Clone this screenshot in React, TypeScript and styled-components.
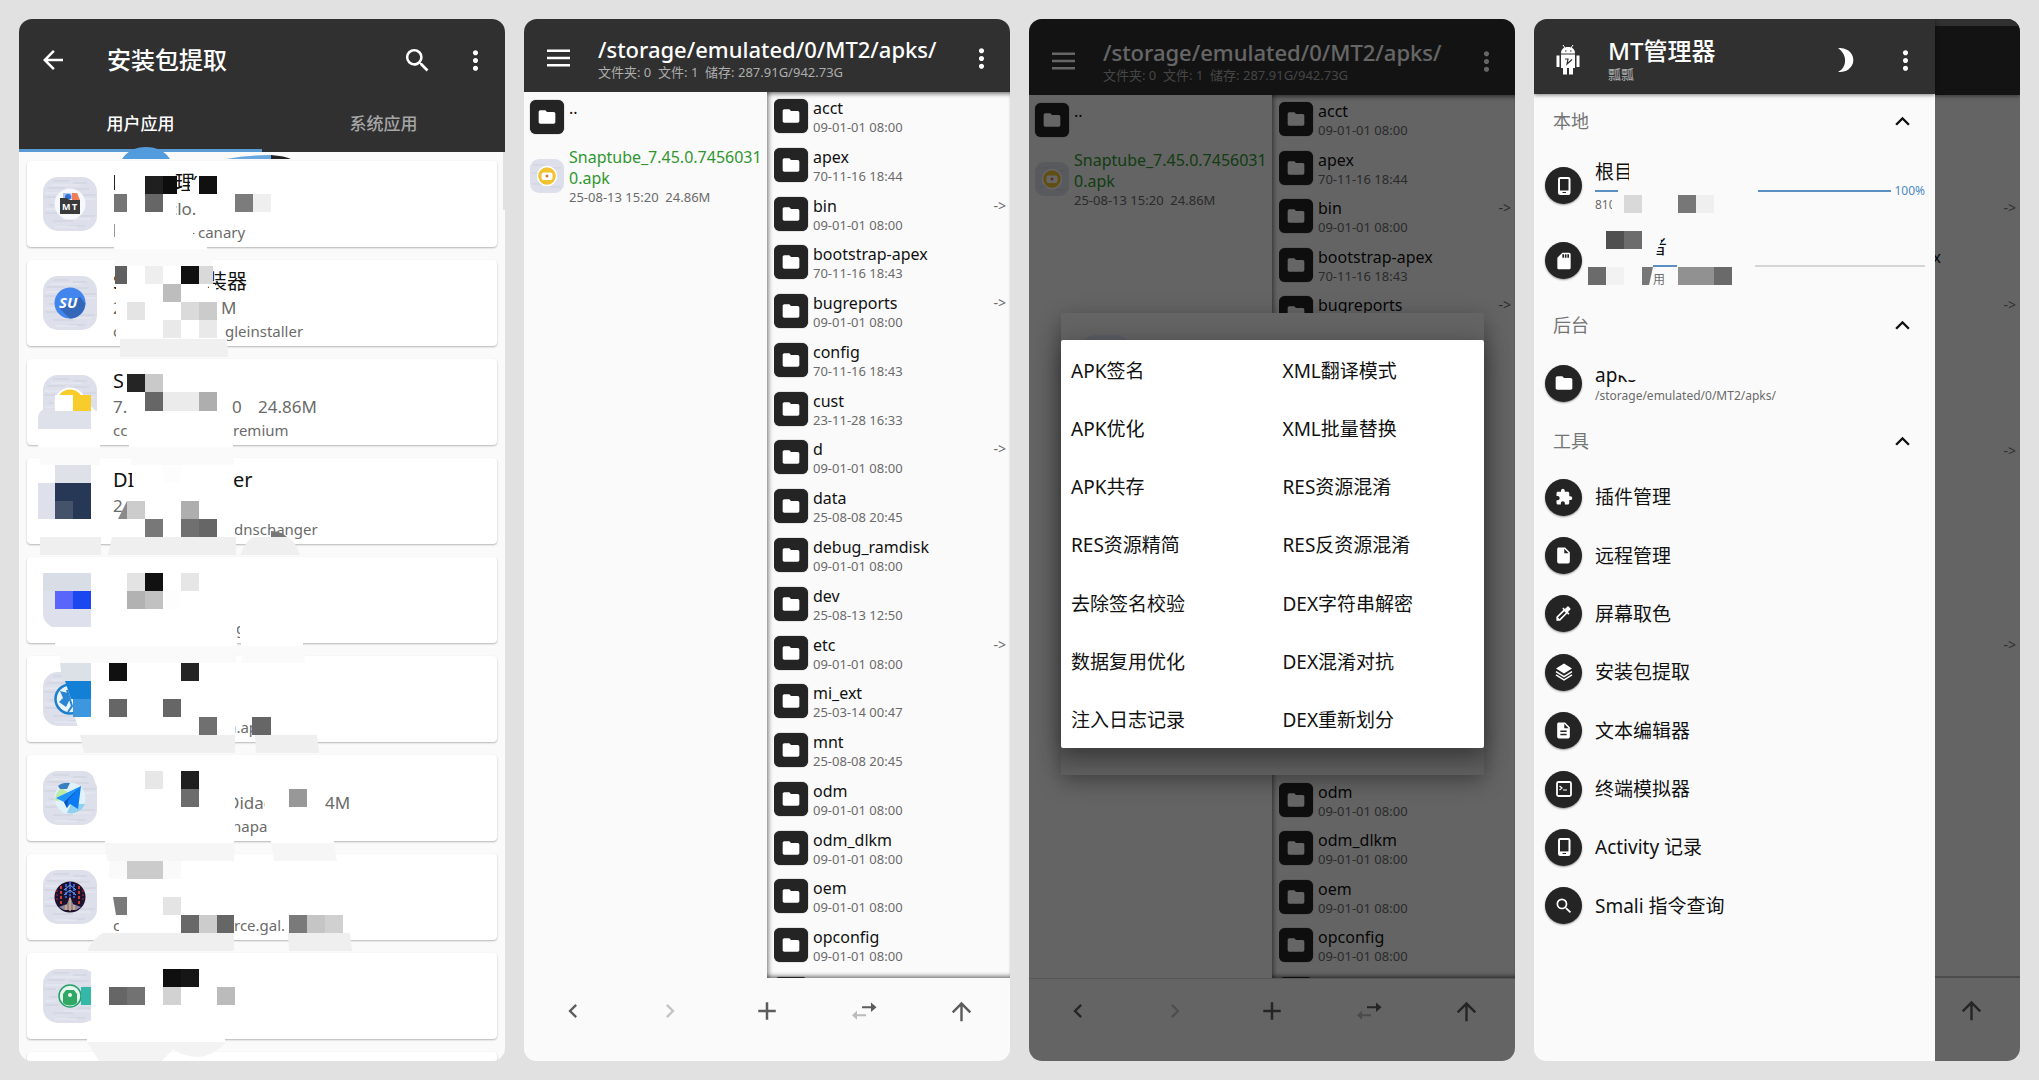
import React from "react";
import styled, { createGlobalStyle, css } from "styled-components";
import {
  MdAdd,
  MdArrowBack,
  MdArrowUpward,
  MdChevronLeft,
  MdChevronRight,
  MdColorize,
  MdDescription,
  MdExtension,
  MdFolder,
  MdInsertDriveFile,
  MdKeyboardArrowUp,
  MdMoreVert,
  MdSdCard,
  MdSearch,
} from "react-icons/md";

const GlobalStyle = createGlobalStyle`
  * { box-sizing: border-box; }
  body {
    margin: 0;
    background: #e1e1e1;
    font-family: "Noto Sans", "Noto Sans CJK SC", sans-serif;
  }
  ul { list-style: none; margin: 0; padding: 0; }
  h2, p { margin: 0; font-weight: 400; }
  button {
    border: 0;
    padding: 0;
    background: none;
    color: inherit;
    font: inherit;
    text-align: left;
  }
  svg { display: block; flex: none; }
`;

/* ---------- shared ---------- */

const Gallery = styled.main`
  display: grid;
  grid-template-columns: repeat(4, minmax(0, 1fr));
  gap: 19px;
  height: 100vh;
  padding: 19px;
`;

const Phone = styled.section`
  position: relative;
  display: flex;
  flex-direction: column;
  min-height: 0;
  overflow: hidden;
  border-radius: 13px;
  background: #fafafa;
`;

const IconButton = styled.button`
  display: flex;
  align-items: center;
  justify-content: center;
  width: 30px;
  height: 30px;
`;

const Overlay = styled.svg<{ $top: number }>`
  position: absolute;
  top: ${(p) => p.$top}px;
  left: 0;
  pointer-events: none;
`;

type Block = [number, number, number, number, string];

const Blocks = ({ items }: { items: Block[] }) => (
  <g shapeRendering="crispEdges">
    {items.map(([x, y, w, h, fill], i) => (
      <rect key={i} x={x} y={y} width={w} height={h} fill={fill} />
    ))}
  </g>
);

/* ---------- screen 1: package extraction ---------- */

const ExtractHeader = styled.header`
  flex: none;
  background: #303030;
  color: #fff;
`;

const ExtractBar = styled.div`
  display: flex;
  align-items: center;
  gap: 28px;
  height: 82px;
  padding: 0 15px 0 19px;
`;

const ExtractTitle = styled.h2`
  flex: 1;
  padding-left: 11px;
  font-size: 24px;
  line-height: 32px;
  font-weight: 500;
`;

const Tabs = styled.div`
  display: grid;
  grid-template-columns: 1fr 1fr;
`;

const Tab = styled.button<{ $active?: boolean }>`
  height: 51px;
  padding-bottom: 3px;
  border-bottom: 3px solid ${(p) => (p.$active ? "#5b9bd5" : "transparent")};
  color: ${(p) => (p.$active ? "#fff" : "#a6a6a6")};
  font-size: 17px;
  line-height: 24px;
  font-weight: 500;
  text-align: center;
`;

const AppList = styled.ul`
  display: flex;
  flex: 1;
  flex-direction: column;
  gap: 13px;
  min-height: 0;
  padding: 9px 8px 0;
  overflow: hidden;
`;

const AppCard = styled.li`
  display: flex;
  flex: none;
  gap: 16px;
  height: 86px;
  padding: 9px 16px 0;
  border-radius: 4px;
  background: #fff;
  box-shadow: 0 1px 2px rgba(0, 0, 0, 0.28);

  > svg {
    margin-top: 7px;
  }
`;

const lineKinds = {
  name: css`
    height: 26px;
    font-size: 20px;
    line-height: 26px;
    color: #111;
  `,
  version: css`
    height: 26px;
    font-size: 17px;
    line-height: 26px;
    color: #6b6b6b;
  `,
  pkg: css`
    height: 20px;
    font-size: 15px;
    line-height: 20px;
    color: #6b6b6b;
  `,
};

const AppLine = styled.div<{ $kind: keyof typeof lineKinds }>`
  display: flex;
  white-space: pre;
  ${(p) => lineKinds[p.$kind]}
`;

const Slot = styled.span<{ $w: number }>`
  flex: none;
  width: ${(p) => p.$w}px;
`;

/* Each piece of a line: text and the room it takes before the next piece. */
type Piece = [string, number];
type AppEntry = {
  art: React.ReactNode;
  name: Piece[];
  version: Piece[];
  pkg: Piece[];
};

const Tile = ({ children }: { children?: React.ReactNode }) => (
  <svg width="54" height="54" viewBox="0 0 54 54">
    <rect width="54" height="54" rx="15" fill="#dde0ea" />
    <g stroke="#c9cddb" strokeWidth="1" fill="none" opacity=".8">
      <path d="M10 4h16M30 6h14M4 11h18M26 12h20M1 20h12M40 18h13M2 36h14M34 39h18M10 44h20M26 49h16M6 28h8" />
    </g>
    <g stroke="#e9ebf2" strokeWidth="1" fill="none">
      <path d="M8 8h30M2 16h20M30 22h22M2 32h10M20 42h28M12 50h22" />
    </g>
    {children}
  </svg>
);

const IconText = styled.text`
  font-family: "Noto Sans", sans-serif;
  font-weight: 700;
  fill: #fff;
`;

const apps: AppEntry[] = [
  {
    art: (
      <Tile>
        <circle cx="27" cy="27" r="15.5" fill="#f6f8fb" />
        <path d="M20 22v-6h8l2 6z" fill="#a9c4ee" />
        <circle cx="25" cy="20" r="3" fill="#2f6fd8" />
        <path d="M29 16h5l3 7h-8z" fill="#ef7d57" />
        <path d="M17 21h7l2 2h11v14H17z" fill="#3a3a3a" />
        <IconText x="19" y="33" fontSize="9">M</IconText>
        <IconText x="29" y="33" fontSize="9">T</IconText>
      </Tile>
    ),
    name: [["", 62], ["理", 17], ["′", 20]],
    version: [["", 56], ["clo.", 40]],
    pkg: [["", 77], ["-", 8], ["canary", 60]],
  },
  {
    art: (
      <Tile>
        <circle cx="27" cy="27" r="15.5" fill="#4285ec" />
        <path d="M37 21L42.300 27.500A15.500 15.500 0 0 1 27 42.500L17 33z" fill="#3467b8" />
        <IconText x="16" y="32" fontSize="15" fontStyle="italic">SU</IconText>
      </Tile>
    ),
    name: [["S", 94], ["装器", 44]],
    version: [["2", 108], ["M", 20]],
    pkg: [["c", 112], ["gleinstaller", 90]],
  },
  {
    art: (
      <Tile>
        <circle cx="27" cy="28" r="14.500" fill="#f8cd2b" stroke="#fff" strokeWidth="2" />
      </Tile>
    ),
    name: [["S", 20]],
    version: [["7.", 119], ["0", 26], ["24.86M", 60]],
    pkg: [["cc", 120], ["remium", 60]],
  },
  {
    art: <svg width="54" height="54" />,
    name: [["DI", 120], ["er", 24]],
    version: [["2", 20]],
    pkg: [["", 121], ["dnschanger", 90]],
  },
  {
    art: <svg width="54" height="54" />,
    name: [],
    version: [],
    pkg: [["", 123], ["g", 10]],
  },
  {
    art: (
      <Tile>
        <circle cx="27" cy="27" r="14.500" fill="#eaf4fc" stroke="#1d7fd0" strokeWidth="2.500" />
        <path d="M17 19l8 2 2 6-4 8-7-5 4-4z" fill="#2a86d2" />
        <path d="M24 18l5 16-4 6" stroke="#2a86d2" strokeWidth="2" fill="none" />
      </Tile>
    ),
    name: [],
    version: [],
    pkg: [["", 115], ["a.ap", 30]],
  },
  {
    art: (
      <Tile>
        <circle cx="27" cy="27" r="15.500" fill="#dff2fb" />
        <path d="M12 30a15.500 15.500 0 0 1 7-13l8 6-8 6z" fill="#bdeaa5" />
        <path d="M15 15q5-4 12-3l-3 6h-7z" fill="#3b7fc0" />
        <path d="M24 42l4-9h14a15.500 15.500 0 0 1-18 9z" fill="#8fd0ee" />
        <path d="M38 15L13 27l8 4z" fill="#1f94ff" />
        <path d="M38 15L21 31l3 6 3-4 8 5z" fill="#0a7bf2" />
        <path d="M38 15L21 31l3 6 1-8z" fill="#0b55b5" />
      </Tile>
    ),
    name: [],
    version: [["", 114], ["Didac", 98], ["4M", 30]],
    pkg: [["", 119], ["napa.", 40]],
  },
  {
    art: (
      <Tile>
        <circle cx="27" cy="27" r="15.500" fill="#1c1230" />
        <path d="M18 16v20M36 16v20" stroke="#c8402e" strokeWidth="2" strokeDasharray="3 2" />
        <path d="M14 20v12M40 20v12" stroke="#6f1d2b" strokeWidth="2" strokeDasharray="2 2" />
        <path d="M23 14v14M27 12v14M31 14v14" stroke="#2d5fd0" strokeWidth="2" strokeDasharray="3 1" />
        <path d="M21 20l6-5 6 5M21 25l6-5 6 5" stroke="#77a8f0" fill="none" />
        <path d="M27 26l3 8 8 3-5 3H21l-5-3 8-3z" fill="#8a86a8" />
        <path d="M27 28v13M23 35v5M31 35v5" stroke="#e5b06a" strokeWidth="1.500" />
      </Tile>
    ),
    name: [],
    version: [],
    pkg: [["c", 121], ["rce.gal.", 60]],
  },
  {
    art: (
      <Tile>
        <circle cx="27" cy="27" r="11" fill="#e8f7ee" stroke="#23a06b" strokeWidth="1.500" />
        <path d="M20 34v-9l3-4h8l3 4v9a11 11 0 0 1-14 0z" fill="#2fa765" />
        <circle cx="27" cy="26" r="2" fill="#e8f7ee" />
      </Tile>
    ),
    name: [],
    version: [],
    pkg: [],
  },
  { art: <svg width="54" height="54" />, name: [], version: [], pkg: [] },
];

const W = "#fff";
const extractBlocks: Block[] = [
  // row 1
  [114, 246, 93, 3, W], [115, 249, 97, 17, "#fafafa"],
  [145, 176, 18, 18, "#1f1f1f"], [163, 176, 14, 18, "#0d0d0d"],
  [199, 176, 18, 18, "#101010"], [190, 180, 7, 14, "#fafafa"],
  [114, 175, 1, 15, "#222"], [114, 194, 13, 18, "#757575"], [127, 194, 18, 18, W],
  [145, 194, 18, 18, "#666"], [163, 196, 13, 22, W],
  [235, 194, 18, 18, "#7c7c7c"], [253, 194, 18, 18, "#efefef"],
  [114, 224, 1, 13, "#999"], [160, 231, 33, 10, W],
  // row 2
  [116, 284, 60, 54, W],
  [115, 266, 12, 18, "#606060"], [127, 266, 18, 18, W], [145, 266, 18, 18, "#eee"],
  [181, 266, 18, 18, "#101010"], [199, 266, 14, 18, "#d9d9d9"],
  [163, 284, 18, 18, "#bdbdbd"], [127, 302, 18, 18, "#e4e4e4"],
  [181, 302, 18, 18, "#dadada"], [199, 302, 18, 18, "#cbcbcb"],
  [163, 320, 18, 18, "#e9e9e9"], [199, 320, 18, 18, "#e9e9e9"], [217, 320, 7, 18, W],
  // row 3
  [123, 374, 8, 20, W], [127, 374, 18, 18, "#252525"], [145, 374, 18, 18, "#c9c9c9"],
  [127, 412, 106, 28, W],
  [145, 392, 18, 19, "#666"], [163, 392, 36, 19, "#ebebeb"], [199, 392, 18, 19, "#aeaeae"],
  [55, 395, 18, 16, W], [73, 395, 18, 16, "#f8cd2b"],
  [91, 411, 7, 19, W], [38, 429, 62, 18, W], [129, 443, 104, 5, W],
  [40, 447, 60, 18, "#fafafa"], [131, 447, 103, 18, "#fafafa"],
  // row 4
  [132, 465, 101, 18, W], [163, 465, 18, 18, "#fdfdfd"], [230, 519, 5, 18, W],
  [55, 465, 36, 18, "#dfe1e8"], [38, 483, 17, 36, "#dee0eb"], [55, 483, 36, 36, "#273857"],
  [55, 501, 18, 18, "#445369"], [127, 501, 18, 18, "#ccc"], [181, 501, 18, 18, "#aeaeae"],
  [145, 519, 18, 18, "#787878"], [181, 519, 18, 18, "#707070"], [199, 519, 18, 18, "#666"],
  [40, 537, 61, 18, "#efefef"],
  // row 5
  [127, 573, 18, 18, "#e3e3e3"], [145, 573, 18, 18, "#111"], [181, 573, 18, 18, "#e6e6e6"],
  [127, 591, 18, 18, "#b2b2b2"], [145, 591, 18, 18, "#c1c1c1"], [163, 591, 18, 18, "#fdfdfd"],
  [231, 620, 6, 20, W], [240, 620, 12, 20, W],
  [55, 636, 182, 10, W], [241, 640, 62, 6, W], [60, 646, 176, 17, "#fafafa"], [242, 646, 63, 17, "#fafafa"],
  // row 6
  [109, 663, 18, 18, "#101010"], [181, 663, 18, 18, "#242424"],
  [109, 699, 18, 18, "#666"], [163, 699, 18, 18, "#666"],
  [226, 717, 9, 18, W], [199, 717, 18, 18, "#707070"], [252, 717, 19, 18, "#666"],
  // row 7
  [145, 771, 18, 18, "#e7e7e7"], [181, 771, 18, 18, "#202020"], [181, 789, 18, 18, "#6c6c6c"],
  [226, 790, 9, 48, W], [265, 790, 12, 24, W], [289, 789, 18, 18, "#989898"], [268, 815, 10, 20, W],
  [105, 840, 129, 3, W], [271, 840, 63, 3, W],
  // row 8
  [109, 861, 18, 18, "#fafafa"], [127, 861, 36, 18, "#cbcbcb"], [163, 861, 18, 18, "#fafafa"],
  [163, 897, 18, 18, "#e4e4e4"], [119, 915, 20, 18, W],
  [181, 915, 18, 18, "#686868"], [199, 915, 18, 18, "#ccc"], [217, 915, 17, 18, "#666"],
  [289, 915, 18, 18, "#7a7a7a"], [307, 915, 18, 18, "#c5c5c5"], [325, 915, 18, 18, "#d0d0d0"],
  // row 9
  [91, 968, 8, 56, W], [81, 987, 10, 18, "#35b8a8"],
  [163, 969, 18, 18, "#0f0f0f"], [181, 969, 18, 18, "#161616"],
  [109, 987, 18, 18, "#666"], [127, 987, 18, 18, "#727272"],
  [163, 987, 18, 18, "#d2d2d2"], [217, 987, 18, 18, "#bbb"],
  [87, 1039, 138, 3, W],
];

const ExtractMosaic = () => (
  <Overlay $top={121} width="486" height="921" viewBox="19 140 486 921">
    <path d="M122 159q8-12 24-12t24 12z" fill="#529bdc" />
    <path d="M226 159q22-4 45-4v4z" fill="#67a6de" />
    <path d="M271 155q14 1 20 4h-20z" fill="#222" />
    <path d="M503 152h2v58h-2z" fill="#e1e1e1" />
    <path d="M38 429V416q3-7 5-6h48v19z" fill="#dfe1ea" />
    <path d="M86 402l11 10v3H91v-4z" fill={W} />
    <Blocks items={extractBlocks} />
    <path d="M120 339h107l1 18H120z" fill="#f0f0f0" />
    <path d="M209 284h6l4 18h-10z" fill={W} />
    <path d="M118 519l9-18v18z" fill="#8a8a8a" />
    <path d="M112 537h124v18H108z" fill="#efefef" />
    <path d="M240 555l4-8q5-9 10-10h34q7 3 12 18z" fill="#efefef" />
    <path d="M271 531q10 0 16 6h-16z" fill="#777" />
    <path d="M43 573h48v18H43z" fill="#d8dde6" />
    <path d="M43 591h48v36H52q-9-5-9-13z" fill="#dee0eb" />
    <path d="M55 591h18v18H55z" fill="#5a66fa" />
    <path d="M73 591h18v18H73z" fill="#1a47ee" />
    <path d="M60 663h31v18H62z" fill="#dce1e7" />
    <path d="M65 681h26v18H71z" fill="#1380d6" />
    <path d="M73 699h18v18H73z" fill="#3d97df" />
    <path d="M75 717h24v10H78z" fill={W} />
    <path d="M91 671h8v50h-8z" fill={W} />
    <path d="M80 735h155v18H84zM255 735h62l2 18h-63z" fill="#efefef" />
    <path d="M91 771l6 16v-17z" fill={W} />
    <path d="M105 843h130l-1 18H107zM271 843h63l3 18h-63z" fill="#f6f6f6" />
    <path d="M113 897h14v18h-11z" fill="#7a7a7a" />
    <path d="M87 951q7-15 17-18h130v18zM288 933h62l2 18h-63z" fill="#efefef" />
    <path d="M87 1042h139q-12 14-28 15-14 0-25-8l-11 12H99z" fill="#f3f3f3" />
  </Overlay>
);

const AppText = ({ kind, pieces }: { kind: keyof typeof lineKinds; pieces: Piece[] }) => (
  <AppLine $kind={kind}>
    {pieces.map(([text, w], i) => (
      <Slot key={i} $w={w}>{text}</Slot>
    ))}
  </AppLine>
);

const ExtractScreen = () => (
  <Phone aria-label="安装包提取">
    <ExtractHeader>
      <ExtractBar>
        <IconButton aria-label="返回"><MdArrowBack size={30} /></IconButton>
        <ExtractTitle>安装包提取</ExtractTitle>
        <IconButton aria-label="搜索"><MdSearch size={31} /></IconButton>
        <IconButton aria-label="更多"><MdMoreVert size={31} /></IconButton>
      </ExtractBar>
      <Tabs role="tablist">
        <Tab role="tab" aria-selected $active>用户应用</Tab>
        <Tab role="tab" aria-selected={false}>系统应用</Tab>
      </Tabs>
    </ExtractHeader>
    <AppList>
      {apps.map((app, i) => (
        <AppCard key={i}>
          {app.art}
          <div>
            <AppText kind="name" pieces={app.name} />
            <AppText kind="version" pieces={app.version} />
            <AppText kind="pkg" pieces={app.pkg} />
          </div>
        </AppCard>
      ))}
    </AppList>
    <ExtractMosaic />
  </Phone>
);

/* ---------- file manager (screens 2 and 3) ---------- */

const PathBar = styled.header<{ $drop: number }>`
  display: flex;
  flex: none;
  align-items: center;
  height: ${(p) => 73 + p.$drop}px;
  padding: ${(p) => 5 + p.$drop}px 14px 0 19px;
  background: #303030;
  color: #fff;
`;

const Heading = styled.div`
  flex: 1;
  min-width: 0;
  padding-left: 25px;
  white-space: pre;
`;

const HeadTitle = styled.h2<{ $size: number }>`
  font-size: ${(p) => p.$size}px;
  line-height: 28px;
  font-weight: 500;
`;

const HeadNote = styled.p`
  font-size: 13px;
  line-height: 18px;
  color: #adadad;
`;

const Panes = styled.div`
  display: grid;
  flex: 1;
  grid-template-columns: 1fr 1fr;
  min-height: 0;
`;

const LeftPane = styled.ul`
  padding: 6px 0 0 6px;
`;

const RightPane = styled.ul`
  display: grid;
  grid-template-rows: repeat(18, minmax(0, 1fr)) 8px;
  min-height: 0;
  padding-left: 7px;
  overflow: hidden;
  box-shadow: inset 5px 0 4px -3px rgba(0, 0, 0, 0.4), inset 0 5px 4px -3px rgba(0, 0, 0, 0.5),
    inset 0 -5px 4px -3px rgba(0, 0, 0, 0.5);
`;

const FileRow = styled.li`
  display: flex;
  align-items: flex-start;
  padding-top: 6px;
  overflow: hidden;
`;

const LeftRow = styled.li`
  display: flex;
  align-items: center;
  min-height: 37px;
  margin-bottom: 12px;
`;

const FolderTile = styled.span`
  display: grid;
  flex: none;
  place-items: center;
  width: 34px;
  height: 34px;
  margin-top: 1px;
  border-radius: 6px;
  background: #242424;
  color: #fff;
  box-shadow: 0 0 1px #242424;
`;

const FileText = styled.div`
  flex: 1;
  min-width: 0;
  padding-left: 5px;
`;

const FileName = styled.p<{ $green?: boolean }>`
  font-size: 16px;
  line-height: 21px;
  color: ${(p) => (p.$green ? "#2f962f" : "#111")};
  word-break: break-all;
`;

const FileDate = styled.p`
  height: 16px;
  font-size: 13px;
  line-height: 16px;
  color: #6b6b6b;
  white-space: pre;
`;

const LinkMark = styled.span`
  padding: 1px 4px 0 0;
  font-size: 14px;
  line-height: 18px;
  color: #6b6b6b;
`;

const BottomBar = styled.nav<{ $line?: boolean }>`
  display: grid;
  flex: none;
  grid-template-columns: repeat(5, 1fr);
  height: 83px;
  padding-top: 17px;
  border-top: 1px solid ${(p) => (p.$line ? "#d8d8d8" : "#fafafa")};
  background: #fafafa;
  color: #5c5c5c;
`;

const BarButton = styled.button<{ $dim?: boolean }>`
  display: flex;
  align-items: center;
  justify-content: center;
  height: 30px;
  color: ${(p) => (p.$dim ? "#c4c4c4" : "inherit")};
`;

const files: [string, string, boolean?][] = [
  ["acct", "09-01-01 08:00"],
  ["apex", "70-11-16 18:44"],
  ["bin", "09-01-01 08:00", true],
  ["bootstrap-apex", "70-11-16 18:43"],
  ["bugreports", "09-01-01 08:00", true],
  ["config", "70-11-16 18:43"],
  ["cust", "23-11-28 16:33"],
  ["d", "09-01-01 08:00", true],
  ["data", "25-08-08 20:45"],
  ["debug_ramdisk", "09-01-01 08:00"],
  ["dev", "25-08-13 12:50"],
  ["etc", "09-01-01 08:00", true],
  ["mi_ext", "25-03-14 00:47"],
  ["mnt", "25-08-08 20:45"],
  ["odm", "09-01-01 08:00"],
  ["odm_dlkm", "09-01-01 08:00"],
  ["oem", "09-01-01 08:00"],
  ["opconfig", "09-01-01 08:00"],
];

const MenuIcon = () => (
  <svg width="30" height="30" viewBox="0 0 30 30" fill="currentColor">
    <path d="M4 6.500h23v2.400H4zM4 13.800h23v2.400H4zM4 21h23v2.400H4z" />
  </svg>
);

const SwapIcon = () => (
  <svg width="26" height="22" viewBox="0 0 26 22">
    <path d="M11 6.300h9V2.500l5.500 4.800-5.500 4.700V8.300h-9z" fill="currentColor" />
    <path d="M15 14.300H6v-3.500l-5 4.500 5 4.500v-3.500h9z" fill="currentColor" opacity=".4" />
  </svg>
);

const SnapIcon = () => (
  <svg width="34" height="34" viewBox="0 0 34 34">
    <rect width="34" height="34" rx="9" fill="#dde0ea" />
    <path d="M3 6h12M18 9h13M2 14h7M3 25h8M20 28h11" stroke="#cdd1de" />
    <circle cx="17" cy="17" r="9.500" fill="#f2c230" stroke="#fff" strokeWidth="1.500" />
    <rect x="11.500" y="13.500" width="11" height="7.500" rx="2" fill="#fff" />
    <circle cx="17" cy="17" r="1.500" fill="#d9743a" />
  </svg>
);

const Folder = () => (
  <FolderTile><MdFolder size={20} /></FolderTile>
);

type ManagerProps = {
  drop: number;
  line?: boolean;
  /* Rows first..last lie under an open dialog and keep only their space. */
  covered?: [number, number];
};

const FileManager = ({ drop, line, covered = [99, 99] }: ManagerProps) => (
  <>
    <PathBar $drop={drop}>
      <IconButton aria-label="菜单"><MenuIcon /></IconButton>
      <Heading>
        <HeadTitle $size={22}>/storage/emulated/0/MT2/apks/</HeadTitle>
        <HeadNote>{"文件夹: 0  文件: 1  储存: 287.91G/942.73G"}</HeadNote>
      </Heading>
      <IconButton aria-label="更多"><MdMoreVert size={31} /></IconButton>
    </PathBar>
    <Panes>
      <LeftPane>
        <LeftRow>
          <Folder />
          <FileText>
            <FileName>..</FileName>
            <FileDate />
          </FileText>
        </LeftRow>
        <LeftRow>
          <SnapIcon />
          <FileText>
            <FileName $green>Snaptube_7.45.0.74560310.apk</FileName>
            <FileDate>{"25-08-13 15:20  24.86M"}</FileDate>
          </FileText>
        </LeftRow>
      </LeftPane>
      <RightPane>
        {files.map(([name, date, link], i) => {
          if (i > covered[0] && i <= covered[1]) return <FileRow key={name} />;
          return (
            <FileRow key={name}>
              <Folder />
              <FileText>
                <FileName>{name}</FileName>
                {i !== covered[0] && <FileDate>{date}</FileDate>}
              </FileText>
              {link && <LinkMark>-&gt;</LinkMark>}
            </FileRow>
          );
        })}
        <FileRow>
          <Folder />
        </FileRow>
      </RightPane>
    </Panes>
    <BottomBar $line={line}>
      <BarButton aria-label="后退"><MdChevronLeft size={28} /></BarButton>
      <BarButton aria-label="前进" $dim><MdChevronRight size={28} /></BarButton>
      <BarButton aria-label="新建"><MdAdd size={30} /></BarButton>
      <BarButton aria-label="同步"><SwapIcon /></BarButton>
      <BarButton aria-label="上级"><MdArrowUpward size={29} /></BarButton>
    </BottomBar>
  </>
);

const Scrim = styled.div`
  position: absolute;
  inset: 0;
  background: rgba(0, 0, 0, 0.6);
`;

const BackDialog = styled.div`
  position: absolute;
  inset: 294px 31px 286px 32px;
  padding: 22px;
  border-radius: 2px;
  background: linear-gradient(#646464 90%, #565656 95%, #5f5f5f);
  box-shadow: 0 6px 22px rgba(0, 0, 0, 0.35);
`;

const BackDialogIcon = styled.div`
  width: 46px;
  height: 46px;
  border-radius: 12px;
  background: #5d5d66;
`;

const FunctionMenu = styled.div`
  position: absolute;
  inset: 321px 31px 313px 32px;
  display: grid;
  grid-template-columns: 1fr 1fr;
  grid-auto-rows: 1fr;
  border-radius: 2px;
  background: #fff;
  box-shadow: 0 6px 26px rgba(0, 0, 0, 0.4);
`;

const FunctionItem = styled.button`
  padding: 3px 0 0 10px;
  font-size: 19px;
  line-height: 26px;
  color: #111;
`;

const functions = [
  "APK签名", "XML翻译模式",
  "APK优化", "XML批量替换",
  "APK共存", "RES资源混淆",
  "RES资源精简", "RES反资源混淆",
  "去除签名校验", "DEX字符串解密",
  "数据复用优化", "DEX混淆对抗",
  "注入日志记录", "DEX重新划分",
];

/* ---------- screen 4: side drawer ---------- */

const Sides = styled.div`
  display: grid;
  flex: 1;
  grid-template-columns: minmax(0, 401fr) minmax(0, 85fr);
  min-height: 0;
`;

const Drawer = styled.div`
  position: relative;
  background: #fafafa;
`;

const DrawerBar = styled(PathBar)`
  position: relative;
  padding-right: 15px;
  box-shadow: 0 1px 4px rgba(0, 0, 0, 0.5);
`;

const MoonButton = styled(IconButton)`
  margin-right: 29px;
`;

const SectionToggle = styled.button`
  display: flex;
  align-items: center;
  justify-content: space-between;
  width: 100%;
  height: 54px;
  padding: 0 18px 0 19px;
  color: #757575;
  font-size: 18px;
  line-height: 24px;

  svg {
    color: #111;
  }
`;

const Entry = styled.button<{ $h?: number }>`
  display: flex;
  align-items: center;
  gap: 13px;
  width: 100%;
  height: ${(p) => (p.$h ? `${p.$h}px` : "auto")};
  padding: 0 10px 0 11px;
`;

const Disc = styled.span`
  display: grid;
  flex: none;
  place-items: center;
  width: 37px;
  height: 37px;
  border-radius: 50%;
  background: #242424;
  color: #fff;
  box-shadow: 0 1px 2px rgba(0, 0, 0, 0.4);
`;

const EntryBody = styled.span`
  display: flex;
  flex: 1;
  flex-direction: column;
  min-width: 0;
`;

const EntryTitle = styled.span<{ $indent?: number }>`
  height: 26px;
  padding-left: ${(p) => p.$indent ?? 0}px;
  font-size: 19px;
  line-height: 26px;
  color: #111;
`;

const EntryNote = styled.span<{ $indent?: number }>`
  height: 16px;
  padding-left: ${(p) => p.$indent ?? 0}px;
  font-size: 12px;
  line-height: 16px;
  color: #6b6b6b;
`;

const Usage = styled.span`
  display: flex;
  align-items: center;
  gap: 3px;
  height: 12px;
  color: #4a8ac6;
  font-size: 12px;
  line-height: 12px;
`;

const Track = styled.span`
  flex: 1;
  height: 2px;
  background: #d5d5d5;
`;

const Fill = styled.span`
  display: block;
  height: 2px;
  background: #5b8fc2;
`;

const ToolList = styled.div`
  display: grid;
  grid-auto-rows: 1fr;
  height: 467px;
`;

const Behind = styled.div`
  display: flex;
  flex-direction: column;
  min-width: 0;
  overflow: hidden;
  background: #646464;
`;

const BehindBar = styled.div`
  flex: none;
  height: 76px;
  border-top: 7px solid #303030;
  background: #131313;
  box-shadow: 0 1px 4px rgba(0, 0, 0, 0.5);
`;

const BehindRows = styled.div`
  display: grid;
  flex: 1;
  grid-template-rows: repeat(18, minmax(0, 1fr)) 8px;
  min-height: 0;
  border-bottom: 2px solid #4c4c4c;
`;

const BehindRow = styled.div`
  display: flex;
  justify-content: space-between;
  padding-top: 6px;
  overflow: hidden;
  color: #2d2d2d;
`;

const BehindName = styled.span`
  width: 6px;
  overflow: hidden;
  direction: rtl;
  font-size: 16px;
  line-height: 21px;
  color: #070707;
`;

const BehindMark = styled(LinkMark)`
  color: #303030;
`;

const BehindNav = styled.div`
  display: flex;
  flex: none;
  justify-content: center;
  height: 83px;
  padding: 18px 12px 0 0;
  color: #262626;
`;

const RobotIcon = () => (
  <svg width="26" height="32" viewBox="0 0 26 32" fill="#fff">
    <path d="M6 9.500C6 5 9 3 13 3s7 2 7 6.500z" />
    <path d="M8 1l2 3M18 1l-2 3" stroke="#fff" />
    <path d="M6 10.500h14V24H6zM8 24h4v6.500H8zM14 24h4v6.500h-4zM1.500 11.500H4.500V23H1.500zM21.500 11.500h3V23h-3z" />
    <path d="M10 7h1.500M15 7h1.500" stroke="#303030" />
    <path d="M10 15h3l-1 5 5-4.500" stroke="#303030" fill="none" strokeWidth="1.200" />
  </svg>
);

const MoonIcon = () => (
  <svg width="30" height="30" viewBox="0 0 30 30" fill="#fff">
    <path d="M7 3.200A13 12 0 1 1 7 26.800C15.500 23.500 17.500 10 7 3.200z" />
  </svg>
);

const PhoneIcon = () => (
  <svg width="18" height="20" viewBox="0 0 18 20" fill="none" stroke="#fff">
    <rect x="4" y="2" width="10.500" height="16" rx="1.200" strokeWidth="2" />
    <path d="M4 15.800h10.500" strokeWidth="2.800" />
    <path d="M7.500 16.500h3.500" stroke="#242424" />
  </svg>
);

const LayersIcon = () => (
  <svg width="18" height="18" viewBox="0 0 18 18">
    <path d="M9 .5L17 5.500 9 10.500 1 5.500z" fill="#fff" />
    <path d="M1 8.700L9 13.700 17 8.700M1 11.900L9 16.900 17 11.900" stroke="#fff" strokeWidth="1.500" fill="none" />
  </svg>
);

const TerminalIcon = () => (
  <svg width="18" height="18" viewBox="0 0 18 18" fill="none" stroke="#fff">
    <rect x="2" y="2" width="14" height="14" rx="1.500" strokeWidth="1.800" />
    <path d="M4.500 6l2.500 2-2.500 2M8 10h4" strokeWidth="1.200" />
  </svg>
);

const tools: [string, React.ReactNode][] = [
  ["插件管理", <MdExtension size={18} />],
  ["远程管理", <MdInsertDriveFile size={19} />],
  ["屏幕取色", <MdColorize size={19} />],
  ["安装包提取", <LayersIcon />],
  ["文本编辑器", <MdDescription size={19} />],
  ["终端模拟器", <TerminalIcon />],
  ["Activity 记录", <PhoneIcon />],
  ["Smali 指令查询", <MdSearch size={20} />],
];

const P = "#fafafa";
const drawerBlocks: Block[] = [
  [1629, 158, 40, 26, P], [1618, 186, 140, 8, P],
  [1612, 196, 14, 18, P],
  [1624, 195, 18, 18, "#d9d9d9"], [1678, 195, 18, 18, "#777"], [1696, 195, 18, 18, "#efefef"],
  [1606, 231, 18, 18, "#505050"], [1624, 231, 18, 18, "#6c6c6c"],
  [1593, 261, 60, 6, P], [1677, 261, 78, 8, P],
  [1588, 267, 18, 18, "#6b6b6b"], [1606, 267, 18, 18, "#f2f2f2"],
  [1678, 267, 36, 18, "#919191"], [1714, 267, 18, 18, "#6a6a6a"],
];

const DrawerMosaic = () => (
  <Overlay $top={129} width="401" height="275" viewBox="1534 148 401 275">
    <Blocks items={drawerBlocks} />
    <path d="M1645 234h15l1 8-4 8-1 10h-11z" fill={P} />
    <path d="M1667 234h10v24h-10z" fill={P} />
    <path d="M1642 267h11l-4 18h-7z" fill="#777" />
    <path d="M1616 362h28v18h-13l-8-4-7-2z" fill={P} />
  </Overlay>
);

const Section = ({ name }: { name: string }) => (
  <SectionToggle aria-expanded>
    {name}
    <MdKeyboardArrowUp size={29} />
  </SectionToggle>
);

const DrawerScreen = () => (
  <Phone aria-label="MT管理器">
    <Sides>
      <Drawer>
        <DrawerBar $drop={2}>
          <IconButton aria-label="关于"><RobotIcon /></IconButton>
          <Heading>
            <HeadTitle $size={24}>MT管理器</HeadTitle>
            <HeadNote>瓢瓢</HeadNote>
          </Heading>
          <MoonButton aria-label="夜间模式"><MoonIcon /></MoonButton>
          <IconButton aria-label="更多"><MdMoreVert size={31} /></IconButton>
        </DrawerBar>
        <Section name="本地" />
        <Entry $h={75}>
          <Disc><PhoneIcon /></Disc>
          <EntryBody>
            <EntryTitle>根目</EntryTitle>
            <Usage><Track><Fill style={{ width: "100%" }} /></Track>100%</Usage>
            <EntryNote>810</EntryNote>
          </EntryBody>
        </Entry>
        <Entry $h={75}>
          <Disc><MdSdCard size={20} /></Disc>
          <EntryBody>
            <EntryTitle $indent={53}>者</EntryTitle>
            <Usage><Track><Fill style={{ width: "28%" }} /></Track></Usage>
            <EntryNote $indent={58}>用</EntryNote>
          </EntryBody>
        </Entry>
        <Section name="后台" />
        <Entry $h={62}>
          <Disc><MdFolder size={20} /></Disc>
          <EntryBody>
            <EntryTitle>apks</EntryTitle>
            <EntryNote>/storage/emulated/0/MT2/apks/</EntryNote>
          </EntryBody>
        </Entry>
        <Section name="工具" />
        <ToolList>
          {tools.map(([name, icon]) => (
            <Entry key={name}>
              <Disc>{icon}</Disc>
              <EntryTitle>{name}</EntryTitle>
            </Entry>
          ))}
        </ToolList>
        <DrawerMosaic />
      </Drawer>
      <Behind>
        <BehindBar />
        <BehindRows>
          {files.map(([name, , link]) => (
            <BehindRow key={name}>
              <BehindName>{name === "bootstrap-apex" ? "x" : ""}</BehindName>
              {link && <BehindMark>-&gt;</BehindMark>}
            </BehindRow>
          ))}
        </BehindRows>
        <BehindNav><MdArrowUpward size={29} /></BehindNav>
      </Behind>
    </Sides>
  </Phone>
);

export default function App() {
  return (
    <>
      <GlobalStyle />
      <Gallery>
        <ExtractScreen />
        <Phone aria-label="文件管理">
          <FileManager drop={0} />
        </Phone>
        <Phone aria-label="功能菜单">
          <FileManager drop={3} line covered={[4, 13]} />
          <Scrim />
          <BackDialog><BackDialogIcon /></BackDialog>
          <FunctionMenu>
            {functions.map((name) => (
              <FunctionItem key={name}>{name}</FunctionItem>
            ))}
          </FunctionMenu>
        </Phone>
        <DrawerScreen />
      </Gallery>
    </>
  );
}
